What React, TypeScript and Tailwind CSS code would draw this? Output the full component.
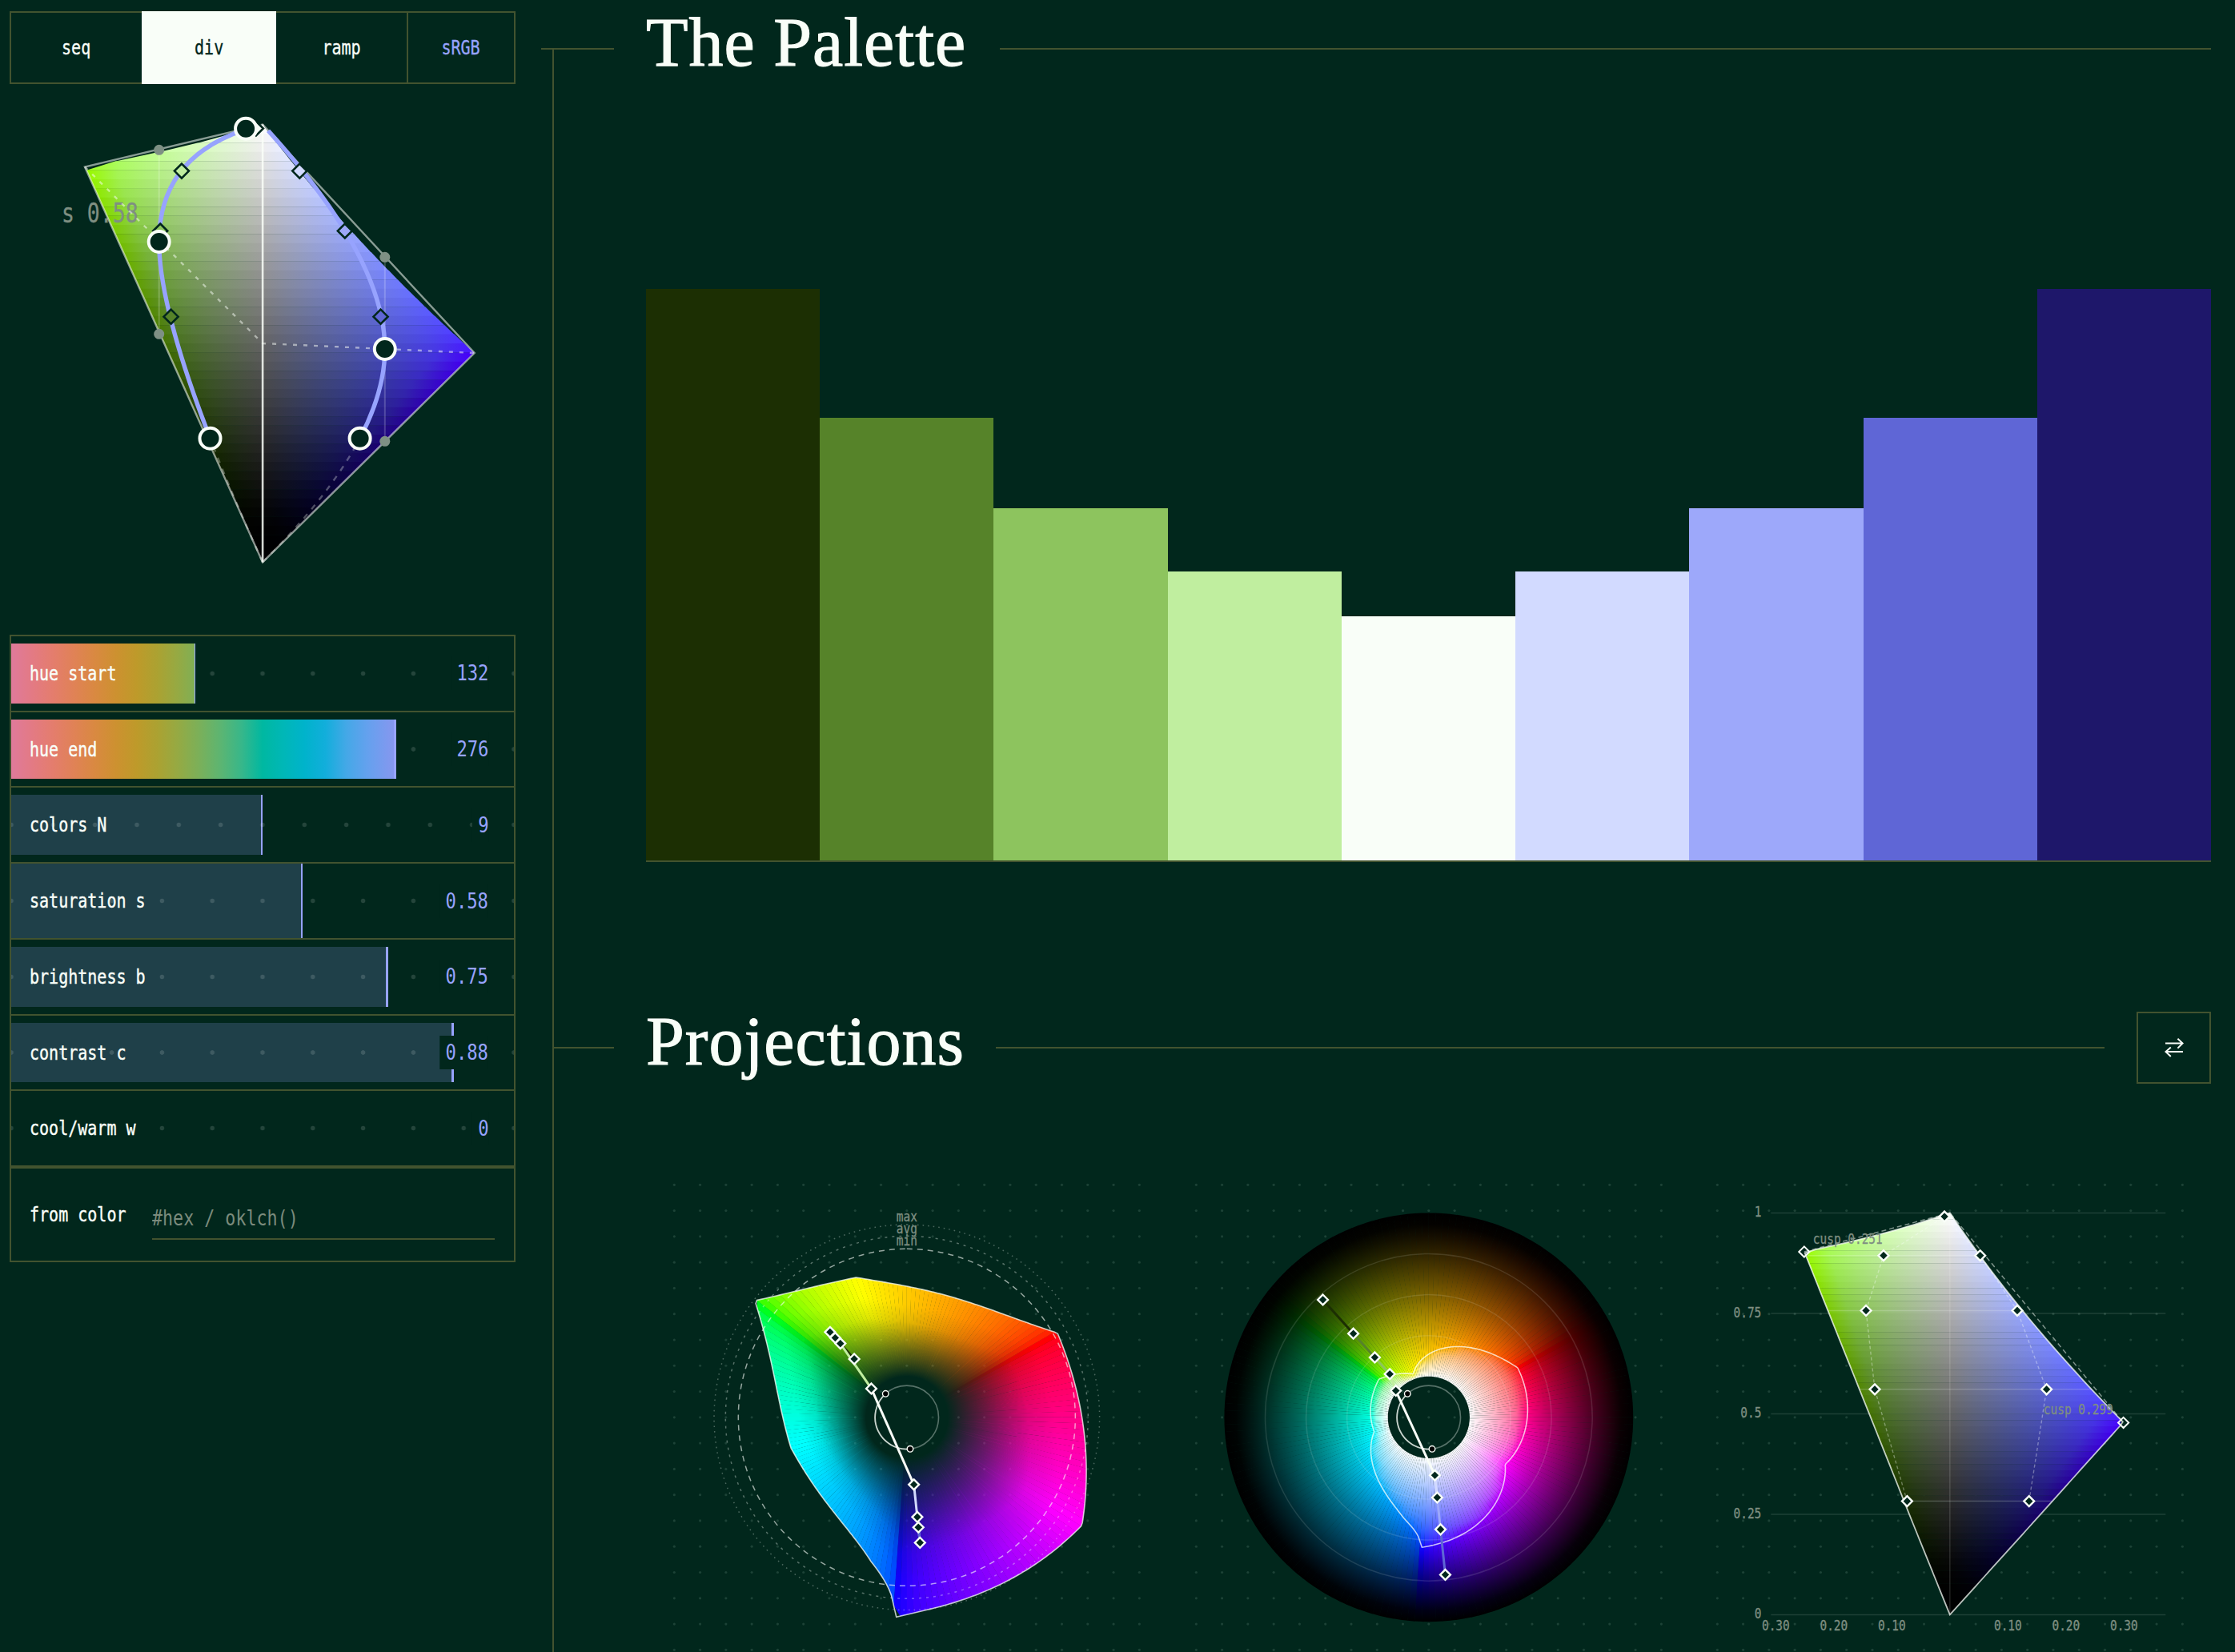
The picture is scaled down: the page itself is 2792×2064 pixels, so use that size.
import { Fragment } from 'react'
import clsx from 'clsx'

const BG = '#01271c'
const INK = '#f9fef8'
const ACCENT = '#97a3fe'

type Pt = [number, number]

// ---------- oklch helpers ----------

const rad = (deg: number) => (deg * Math.PI) / 180

function toLinear(l: number, c: number, h: number): number[] {
  const a = c * Math.cos(rad(h))
  const b = c * Math.sin(rad(h))
  const l_ = (l + 0.3963377774 * a + 0.2158037573 * b) ** 3
  const m_ = (l - 0.1055613458 * a - 0.0638541728 * b) ** 3
  const s_ = (l - 0.0894841775 * a - 1.291485548 * b) ** 3
  return [
    4.0767416621 * l_ - 3.3077115913 * m_ + 0.2309699292 * s_,
    -1.2684380046 * l_ + 2.6097574011 * m_ - 0.3413193965 * s_,
    -0.0041960863 * l_ - 0.7034186147 * m_ + 1.707614701 * s_,
  ]
}

const inGamut = (l: number, c: number, h: number) =>
  toLinear(l, c, h).every((v) => v >= -0.0001 && v <= 1.0001)

function color(l: number, c: number, h: number): string {
  const [r, g, b] = toLinear(l, c, h).map((v) => {
    const x = Math.min(1, Math.max(0, v))
    return Math.round(255 * (x <= 0.0031308 ? 12.92 * x : 1.055 * x ** (1 / 2.4) - 0.055))
  })
  return `rgb(${r} ${g} ${b})`
}

function maxChroma(l: number, h: number): number {
  if (l <= 0 || l >= 0.9995) return 0
  // the lower edge is straight, and the gamut test is not reliable close to black
  if (l < 0.25) return (maxChroma(0.25, h) * l) / 0.25
  let lo = 0
  let hi = 0.4
  for (let i = 0; i < 15; i++) {
    const mid = (lo + hi) / 2
    if (inGamut(l, mid, h)) lo = mid
    else hi = mid
  }
  return lo
}

function cusp(h: number): { l: number; c: number } {
  let lo = 0.3
  let hi = 0.99
  for (let i = 0; i < 22; i++) {
    const a = lo + (hi - lo) / 3
    const b = hi - (hi - lo) / 3
    if (maxChroma(a, h) < maxChroma(b, h)) lo = a
    else hi = b
  }
  const l = (lo + hi) / 2
  return { l, c: maxChroma(l, h) }
}

// The wheels put the blue corner at 266 degrees
function warp(h: number): number {
  if (h <= 256 || h >= 274) return h
  return h <= 266 ? 256 + (h - 256) * 0.806 : 264.06 + (h - 266) * 1.2425
}

// ---------- palette ----------

const HUE_A = 132
const HUE_B = 276
const CUSP_A = { l: 0.9033, c: 0.251 }
const CUSP_B = { l: 0.478, c: 0.299 }

const palette = [
  { l: 0.2825, c: 0.0737, h: HUE_A, height: 714, fill: '#1c2f03' },
  { l: 0.561, c: 0.1294, h: HUE_A, height: 553, fill: '#568329' },
  { l: 0.757, c: 0.1445, h: HUE_A, height: 440, fill: '#8dc45e' },
  { l: 0.894, c: 0.1143, h: HUE_A, height: 361, fill: '#c0ee9f' },
  { l: 0.991, c: 0.0093, h: 141, height: 305, fill: '#f9fef8' },
  { l: 0.894, c: 0.0522, h: HUE_B, height: 361, fill: '#d2daff' },
  { l: 0.757, c: 0.1161, h: HUE_B, height: 440, fill: '#9da8fa' },
  { l: 0.561, c: 0.1666, h: HUE_B, height: 553, fill: '#5f66d6' },
  { l: 0.2825, c: 0.1364, h: HUE_B, height: 714, fill: '#1e176a' },
]

const sliders = [
  { label: 'hue start', value: '132', ratio: 132 / 360, hue: true },
  { label: 'hue end', value: '276', ratio: 276 / 360, hue: true },
  { label: 'colors N', value: '9', ratio: 0.5, dots: 12 },
  { label: 'saturation s', value: '0.58', ratio: 0.58, active: true },
  { label: 'brightness b', value: '0.75', ratio: 0.75 },
  { label: 'contrast c', value: '0.88', ratio: 0.88 },
  { label: 'cool/warm w', value: '0', ratio: 0 },
]

const hueStops = Array.from({ length: 25 }, (_, i) => color(0.7, 0.13, i * 15)).join(', ')

// ---------- svg pieces ----------

interface LabelProps {
  x: number
  y: number
  size: number
  squeeze: number
  anchor?: 'start' | 'middle' | 'end'
  children: string
}

function Label({ x, y, size, squeeze, anchor = 'start', children }: LabelProps) {
  return (
    <text
      transform={`translate(${x} ${y}) scale(${squeeze} 1)`}
      fontSize={size}
      textAnchor={anchor}
      fill="#7f8f82"
      stroke="#7f8f82"
      strokeWidth={0.3}
      className="font-['DejaVu_Sans_Mono',monospace]"
    >
      {children}
    </text>
  )
}

function Diamond({ x, y, r = 7, fill = BG, stroke = INK, width = 2.4 }: { x: number; y: number; r?: number; fill?: string; stroke?: string; width?: number }) {
  return (
    <path
      d={`M${x} ${y - r}L${x + r} ${y}L${x} ${y + r}L${x - r} ${y}Z`}
      fill={fill}
      stroke={stroke}
      strokeWidth={width}
    />
  )
}

function DotGrid() {
  const step = 32.28
  const dots = []
  for (let i = -9; i <= 9; i++) {
    for (let j = -9; j <= 9; j++) {
      dots.push(<circle key={`${i}/${j}`} cx={i * step} cy={j * step} r={1.6} />)
    }
  }
  return <g fill="#1c4236">{dots}</g>
}

// Both hue half-planes of the gamut, drawn as horizontal strips around the grey axis
function GamutSlice({ id, cx, top, height, scale, rows }: { id: string; cx: number; top: number; height: number; scale: number; rows: number }) {
  const steps = 6
  return (
    <>
      {Array.from({ length: rows }, (_, i) => {
        const l1 = 1 - i / rows
        const l0 = 1 - (i + 1) / rows
        const lm = (l0 + l1) / 2
        const cA = maxChroma(lm, HUE_A)
        const cB = maxChroma(lm, HUE_B)
        const y1 = top + (1 - l1) * height
        const y0 = top + (1 - l0) * height + 0.3
        const x1 = cx - cA * scale
        const x2 = cx + cB * scale
        const stops = []
        for (let k = -steps; k <= steps; k++) {
          const c = k < 0 ? (cA * -k) / steps : (cB * k) / steps
          const px = k < 0 ? cx - c * scale : cx + c * scale
          stops.push(
            <stop key={k} offset={(px - x1) / (x2 - x1)} stopColor={color(lm, c, k < 0 ? HUE_A : HUE_B)} />,
          )
        }
        const points: Pt[] = [
          [cx - maxChroma(l1, HUE_A) * scale, y1],
          [cx + maxChroma(l1, HUE_B) * scale, y1],
          [cx + maxChroma(l0, HUE_B) * scale, y0],
          [cx - maxChroma(l0, HUE_A) * scale, y0],
        ]
        return (
          <Fragment key={i}>
            <linearGradient id={`${id}-${i}`} gradientUnits="userSpaceOnUse" x1={x1} x2={x2} y1={0} y2={0}>
              {stops}
            </linearGradient>
            <polygon points={points.map((p) => p.join(',')).join(' ')} fill={`url(#${id}-${i})`} />
          </Fragment>
        )
      })}
    </>
  )
}

// ---------- curve editor ----------

const mix = (a: Pt, b: Pt, t: number): Pt => [a[0] + (b[0] - a[0]) * t, a[1] + (b[1] - a[1]) * t]

// first part of a quadratic curve, cut at t
function quadUntil(p0: Pt, p1: Pt, p2: Pt, t: number): string {
  const q = mix(p0, p1, t)
  const end = mix(q, mix(p1, p2, t), t)
  return `M${p0.join(' ')}Q${q.join(' ')} ${end.join(' ')}`
}

function CurveEditor() {
  const cx = 328.1
  const top = 155.6
  const height = 546.8
  const scale = 885
  const white: Pt = [cx, top]
  const black: Pt = [cx, top + height]
  const cuspA: Pt = [cx - CUSP_A.c * scale, top + (1 - CUSP_A.l) * height]
  const cuspB: Pt = [cx + CUSP_B.c * scale, top + (1 - CUSP_B.l) * height]
  const midA: Pt = [198.7, 302]
  const midB: Pt = [480.8, 436]
  const handles: Pt[] = [[198.7, 187.3], [198.7, 417.3], [480.8, 321.3], [480.8, 551.3]]
  const knobs: Pt[] = [[307.1, 160.7], midA, [262.5, 547.7], midB, [449.6, 547.7]]

  return (
    <svg viewBox="12 105 632 688" className="block h-[688px] w-[632px]">
      <GamutSlice id="edit" cx={cx} top={top} height={height} scale={scale} rows={48} />
      <Label x={77} y={278} size={32.8} squeeze={0.807}>s 0.58</Label>
      <g fill="none">
        <polygon
          points={[white, cuspB, black, cuspA].map((p) => p.join(',')).join(' ')}
          stroke={INK}
          strokeOpacity={0.55}
          strokeWidth={2.4}
        />
        <path d={`M${cx} ${top}V${top + height}`} stroke={INK} strokeOpacity={0.85} strokeWidth={2.6} />
        <path
          d={`M${cuspA.join(' ')}L${cx} ${top + height / 2}L${cuspB.join(' ')}`}
          stroke={INK}
          strokeOpacity={0.5}
          strokeWidth={2.4}
          strokeDasharray="5 8"
        />
        <path d="M198.7 187.3V417.3M480.8 321.3V551.3" stroke={INK} strokeOpacity={0.2} strokeWidth={2} />
        <path
          d={`M${black.join(' ')}Q198.7 417.3 198.7 302M${black.join(' ')}Q480.8 551.3 480.8 436`}
          stroke={INK}
          strokeOpacity={0.3}
          strokeWidth={2.4}
          strokeDasharray="7 8"
        />
        <g stroke={ACCENT} strokeWidth={5.4}>
          <path d={quadUntil(midA, handles[0], white, 0.915)} />
          <path d={quadUntil(midA, handles[1], black, 0.7)} />
          <path d={quadUntil(midB, handles[2], white, 0.977)} />
          <path d={quadUntil(midB, handles[3], black, 0.45)} />
        </g>
      </g>
      {handles.map(([x, y]) => (
        <circle key={`${x}-${y}`} cx={x} cy={y} r={6.5} fill="#7e9084" />
      ))}
      {palette.map((p, i) =>
        i === 0 || i === 8 ? null : (
          <Diamond
            key={i}
            x={i < 5 ? cx - p.c * scale : cx + p.c * scale}
            y={top + (1 - p.l) * height}
            r={9}
            fill={p.fill}
            stroke={BG}
            width={2.6}
          />
        ),
      )}
      {knobs.map(([x, y]) => (
        <circle key={`${x}-${y}`} cx={x} cy={y} r={13} fill={BG} stroke={INK} strokeWidth={4} />
      ))}
    </svg>
  )
}

// ---------- projections ----------

const INNER = 51.1
const SPAN = 204.3

const polar = (r: number, h: number): Pt => [r * Math.cos(rad(h)), -r * Math.sin(rad(h))]
const chromaR = (c: number) => INNER + (c / 0.32) * SPAN
const lightR = (l: number) => INNER + (1 - l) * SPAN

const wedge = (h0: number, h1: number, r0: number, r1: number) =>
  [polar(INNER, h0), polar(r0, h0), polar(r1, h1 + 0.08), polar(INNER, h1 + 0.08)].map((p) => p.join(',')).join(' ')

function HueMarkers({ radius }: { radius: (p: { l: number; c: number }) => number }) {
  const pts = palette.map((p) => polar(radius(p), p.h))
  const a = polar(39.7, HUE_A)
  const b = polar(39.7, HUE_B)
  return (
    <>
      <circle r={39.7} fill="none" stroke={INK} strokeOpacity={0.35} strokeWidth={1.6} />
      <path d={`M${a.join(' ')}A39.7 39.7 0 0 0 ${b.join(' ')}`} fill="none" stroke={INK} strokeOpacity={0.7} strokeWidth={1.8} />
      {pts.slice(0, -1).map((p, i) => (
        <line
          key={i}
          x1={p[0]}
          y1={p[1]}
          x2={pts[i + 1][0]}
          y2={pts[i + 1][1]}
          stroke={palette[i].fill}
          strokeWidth={3}
        />
      ))}
      {[a, b].map(([x, y]) => (
        <circle key={x} cx={x} cy={y} r={3.8} fill="#000" stroke={INK} strokeWidth={1.4} />
      ))}
      {pts.map(([x, y], i) => (
        <Diamond key={i} x={x} y={y} r={6.4} />
      ))}
    </>
  )
}

const outline = Array.from({ length: 361 }, (_, h) => ({ h, ...cusp(warp(h)) }))
const WEDGES = 180

function ChromaWheel() {
  return (
    <svg viewBox="-325.83 -325.83 651.67 651.67" className="block w-full">
      <DotGrid />
      {Array.from({ length: WEDGES }, (_, i) => {
        const h0 = (i * 360) / WEDGES
        const h1 = ((i + 1) * 360) / WEDGES
        const hue = warp((h0 + h1) / 2)
        const k = cusp(hue)
        const r = chromaR(k.c)
        const at = (t: number) => (INNER + (r - INNER) * t) / r
        const edge = color(k.l, k.c, hue)
        return (
          <Fragment key={i}>
            <radialGradient id={`cw-${i}`} gradientUnits="userSpaceOnUse" cx={0} cy={0} r={r}>
              <stop offset={at(0)} stopColor={edge} stopOpacity={0} />
              <stop offset={at(0.3)} stopColor={edge} stopOpacity={0.42} />
              <stop offset={at(0.6)} stopColor={edge} stopOpacity={0.88} />
              <stop offset={at(0.8)} stopColor={edge} />
            </radialGradient>
            <polygon
              points={wedge(h0, h1, chromaR(outline[Math.round(h0)].c), chromaR(outline[Math.round(h1)].c))}
              fill={`url(#cw-${i})`}
            />
          </Fragment>
        )
      })}
      <polygon
        points={outline.map((o) => polar(chromaR(o.c), o.h).join(',')).join(' ')}
        fill="none"
        stroke={INK}
        strokeOpacity={0.75}
        strokeWidth={1.6}
      />
      <g fill="none" stroke={INK} strokeWidth={1.5} transform="rotate(-90)">
        <circle r={210.5} strokeOpacity={0.6} strokeDasharray="7 6" />
        <circle r={226.5} strokeOpacity={0.35} strokeDasharray="3 6" />
        <circle r={240.8} strokeOpacity={0.3} strokeDasharray="1.6 5" />
      </g>
      <Label x={0} y={-245.3} size={16.8} squeeze={0.86} anchor="middle">max</Label>
      <Label x={0} y={-230.3} size={16.8} squeeze={0.86} anchor="middle">avg</Label>
      <Label x={0} y={-214.5} size={16.8} squeeze={0.86} anchor="middle">min</Label>
      <HueMarkers radius={(p) => chromaR(p.c)} />
    </svg>
  )
}

function LightnessWheel() {
  const steps = 14
  const outer = INNER + SPAN
  // keeps the outer rim from going black too early
  const lift = (l: number) => l + 0.035 * Math.min(1, l * 10) * Math.max(0, 1 - l / 0.5)
  return (
    <svg viewBox="-325.83 -325.83 651.67 651.67" className="block w-full">
      <DotGrid />
      {Array.from({ length: WEDGES }, (_, i) => {
        const h0 = (i * 360) / WEDGES
        const h1 = ((i + 1) * 360) / WEDGES
        const hue = warp((h0 + h1) / 2)
        const ls = Array.from({ length: steps + 1 }, (_, k) => 1 - k / steps)
        ls.push(cusp(hue).l)
        ls.sort((a, b) => b - a)
        return (
          <Fragment key={i}>
            <radialGradient id={`lw-${i}`} gradientUnits="userSpaceOnUse" cx={0} cy={0} r={outer}>
              {ls.map((l, k) => (
                <stop key={k} offset={lightR(l) / outer} stopColor={color(lift(l), maxChroma(lift(l), hue), hue)} />
              ))}
            </radialGradient>
            <polygon points={wedge(h0, h1, outer, outer)} fill={`url(#lw-${i})`} />
          </Fragment>
        )
      })}
      <g fill="none" stroke={INK}>
        {[0.75, 0.5, 0.25].map((l) => (
          <circle key={l} r={lightR(l)} strokeOpacity={0.12} strokeWidth={1.5} />
        ))}
        <polygon
          points={outline.map((o) => polar(lightR(o.l), o.h).join(',')).join(' ')}
          strokeOpacity={0.75}
          strokeWidth={1.6}
        />
      </g>
      <HueMarkers radius={(p) => lightR(p.l)} />
    </svg>
  )
}

function SliceChart() {
  const top = -255.4
  const height = 502
  const scale = 725
  const y = (l: number) => top + (1 - l) * height
  const xA = (c: number) => -c * scale
  const xB = (c: number) => c * scale
  const ls = Array.from({ length: 101 }, (_, i) => i / 100)
  const edge = [
    ...ls.map((l) => [xA(maxChroma(l, HUE_A)), y(l)]),
    ...ls.map((l) => [xB(maxChroma(1 - l, HUE_B)), y(1 - l)]),
  ]
  return (
    <svg viewBox="-325.83 -325.83 651.67 651.67" className="block w-full">
      <DotGrid />
      {[1, 0.75, 0.5, 0.25, 0].map((l) => (
        <Fragment key={l}>
          <path d={`M-223.5 ${y(l)}H269.5`} stroke={INK} strokeOpacity={0.12} strokeWidth={1.4} />
          <Label x={-235.5} y={y(l) + 4.6} size={16.8} squeeze={0.86} anchor="end">{String(l)}</Label>
        </Fragment>
      ))}
      {[-0.3, -0.2, -0.1, 0.1, 0.2, 0.3].map((c) => (
        <Label key={c} x={c * scale} y={266} size={16.8} squeeze={0.86} anchor="middle">
          {Math.abs(c).toFixed(2)}
        </Label>
      ))}
      <GamutSlice id="slice" cx={0} top={top} height={height} scale={scale} rows={64} />
      <g fill="none" stroke={INK}>
        <polygon points={edge.map((p) => p.join(',')).join(' ')} strokeOpacity={0.75} strokeWidth={1.8} />
        <path
          d={`M${xA(CUSP_A.c)} ${y(CUSP_A.l)}L0 ${top}L${xB(CUSP_B.c)} ${y(CUSP_B.l)}`}
          strokeOpacity={0.5}
          strokeWidth={1.5}
          strokeDasharray="6 4"
        />
        <path d={`M0 ${top}V${y(0)}`} strokeOpacity={0.15} strokeWidth={1.4} />
        {palette.slice(0, 4).map((p) => (
          <path
            key={p.l}
            d={`M${xA(maxChroma(p.l, HUE_A))} ${y(p.l)}H${xB(maxChroma(p.l, HUE_B))}`}
            strokeOpacity={0.2}
            strokeWidth={1.5}
          />
        ))}
        <polyline
          points={palette.map((p, i) => `${i < 5 ? xA(p.c) : xB(p.c)},${y(p.l)}`).join(' ')}
          strokeOpacity={0.35}
          strokeWidth={1.4}
          strokeDasharray="4 3"
        />
      </g>
      <Label x={-171} y={-216.5} size={16.8} squeeze={0.86}>cusp 0.251</Label>
      <Label x={117} y={-4} size={16.8} squeeze={0.86}>cusp 0.299</Label>
      <Diamond x={xA(CUSP_A.c)} y={y(CUSP_A.l)} r={6.6} fill="none" width={2} />
      <Diamond x={xB(CUSP_B.c)} y={y(CUSP_B.l)} r={6.6} fill="none" width={2} />
      {palette.map((p, i) => (
        <Diamond key={i} x={i < 5 ? xA(p.c) : xB(p.c)} y={y(p.l)} r={6.4} />
      ))}
    </svg>
  )
}

// ---------- controls ----------

function ModeTabs() {
  return (
    <div className="flex h-[91px] w-[632px] border-2 border-[#42532f] text-[24.5px] text-[#f9fef8] [-webkit-text-stroke:0.3px_currentColor]">
      <button className="flex w-[163px] items-center justify-center pt-0.5">
        <span className="inline-block scale-x-[0.817]">seq</span>
      </button>
      <button className="-my-0.5 flex w-[168px] items-center justify-center bg-[#f9fef8] pt-0.5 text-[#01271c]">
        <span className="inline-block scale-x-[0.817]">div</span>
      </button>
      <button className="flex w-[165px] items-center justify-center border-r-2 border-[#42532f] pt-0.5">
        <span className="inline-block scale-x-[0.817]">ramp</span>
      </button>
      <button className="flex flex-1 items-center justify-center pt-0.5 text-[#97a3fe]">
        <span className="inline-block scale-x-[0.817]">sRGB</span>
      </button>
    </div>
  )
}

function Slider({ label, value, ratio, hue, dots = 10, active }: { label: string; value: string; ratio: number; hue?: boolean; dots?: number; active?: boolean }) {
  return (
    <div className="relative flex h-[94.72px] items-center justify-between border-b-2 border-[#42532f] pr-8 pl-[23px]">
      <div
        className="absolute inset-0 bg-[radial-gradient(circle,rgb(249_254_248/0.14)_2.4px,transparent_3.2px)] bg-repeat-x"
        style={{ backgroundSize: `${628 / dots}px 100%`, backgroundPositionX: -314 / dots, zIndex: hue ? 0 : 2 }}
      />
      {ratio > 0 && (
        <div
          className={clsx('absolute left-0 z-1 border-[#97a3fe]', active ? 'inset-y-0' : 'inset-y-[9px]', !hue && 'bg-[#1f4049]')}
          style={{
            width: `${ratio * 100}%`,
            borderRightWidth: 4 * ratio,
            ...(hue && { background: `linear-gradient(90deg, ${hueStops}) 0 0 / 628px 100% no-repeat border-box` }),
          }}
        />
      )}
      <span className="relative z-3 inline-block origin-left scale-x-[0.817] pt-0.5 text-[24.5px] text-[#f9fef8] [-webkit-text-stroke:0.4px_currentColor]">
        {label}
      </span>
      <span className="relative z-3 inline-block h-[42px] origin-right scale-x-[0.81] bg-[#01271c] pl-[9px] text-[27.4px] leading-[42px] text-[#97a3fe]">
        {value}
      </span>
    </div>
  )
}

function SectionHeader({ title, width, children }: { title: string; width: string; children?: React.ReactNode }) {
  return (
    <header className="flex h-[122px] items-center gap-10">
      <div className="h-0.5 w-[75px] bg-[#42532f]" />
      <h2
        className={clsx(
          "pb-4 font-['Liberation_Serif',serif] text-[86px] leading-none tracking-[1px] whitespace-nowrap text-[#f9fef8] [-webkit-text-stroke:1.1px_#f9fef8]",
          width,
        )}
      >
        {title}
      </h2>
      <div className="h-0.5 flex-1 bg-[#42532f]" />
      {children}
    </header>
  )
}

export default function App() {
  return (
    <div className="flex h-[2064px] w-[2792px] overflow-hidden bg-[#01271c] font-['DejaVu_Sans_Mono',monospace]">
      <aside className="w-[676px] shrink-0 pt-3.5 pl-3">
        <ModeTabs />
        <CurveEditor />
        <div className="w-[632px] border-2 border-b-0 border-[#42532f]">
          {sliders.map((s) => (
            <Slider key={s.label} {...s} />
          ))}
        </div>
        <div className="flex h-[119px] w-[632px] items-center border-2 border-[#42532f] pr-6 pl-[23px]">
          <label className="w-[153px] shrink-0 pt-0.5">
            <span className="inline-block origin-left scale-x-[0.817] text-[24.5px] whitespace-nowrap text-[#f9fef8] [-webkit-text-stroke:0.4px_currentColor]">
              from color
            </span>
          </label>
          <div className="mt-0.5 h-[60px] flex-1 border-b-2 border-[#42532f] pt-3.5">
            <span className="inline-block origin-left scale-x-[0.815] text-[26.6px] leading-[38px] text-[#7b8b7d]">#hex / oklch()</span>
          </div>
        </div>
      </aside>

      {/* spine between the controls and the content */}
      <div className="mt-[60px] h-0.5 w-3.5 shrink-0 bg-[#42532f]" />
      <div className="mt-[60px] w-0.5 shrink-0 bg-[#42532f]" />

      <main className="flex-1 pr-[30px]">
        <SectionHeader title="The Palette" width="w-[402px]" />
        <div className="ml-[115px] flex h-[955px] items-end border-b-2 border-[#42532f]">
          {palette.map((p, i) => (
            <div key={i} className="flex-1" style={{ height: p.height, background: p.fill }} />
          ))}
        </div>

        <div className="mt-[171px]">
          <SectionHeader title="Projections" width="w-[397px]">
            <button className="flex h-[90px] w-[93px] items-center justify-center border-2 border-[#42532f]">
              <svg viewBox="0 0 24 24" className="h-6 w-6" fill="none" stroke={INK} strokeWidth={2}>
                <path d="M1 6.5H22.6M16.4 0.8L22.6 6.5L16.4 12.6" />
                <path d="M23 17H1.4M7.8 11.4L1.4 17L7.8 23" />
              </svg>
            </button>
          </SectionHeader>
          <div className="mt-[75px] ml-[115px] grid grid-cols-3">
            <ChromaWheel />
            <LightnessWheel />
            <SliceChart />
          </div>
        </div>
      </main>
    </div>
  )
}
